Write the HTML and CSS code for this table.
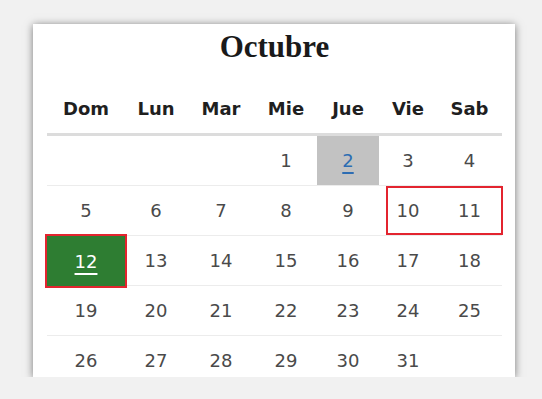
FILE: index.html
```html
<!DOCTYPE html>
<html lang="es">
<head>
  <meta charset="UTF-8">
  <meta name="viewport" content="width=device-width, initial-scale=1.0">
  <title>Calendario</title>
  <link rel="stylesheet" href="styles.css">
</head>
<body>

  <div class="calendar">
    <h1 class="month">Octubre</h1>

    <!-- Nombres de los días -->
    <div class="row weekdays">
      <div>Dom</div>
      <div>Lun</div>
      <div>Mar</div>
      <div>Mie</div>
      <div>Jue</div>
      <div>Vie</div>
      <div>Sab</div>
    </div>

    <!-- Semanas del mes -->
    <div class="row week">
      <div class="day"></div>
      <div class="day"></div>
      <div class="day"></div>
      <div class="day">1</div>
      <div class="day busy"><a href="#">2</a></div>
      <div class="day">3</div>
      <div class="day">4</div>
    </div>

    <div class="row week">
      <div class="day">5</div>
      <div class="day">6</div>
      <div class="day">7</div>
      <div class="day">8</div>
      <div class="day">9</div>
      <!-- fin de semana marcado -->
      <div class="range"></div>
      <div class="day fri">10</div>
      <div class="day sat">11</div>
    </div>

    <div class="row week">
      <div class="day today"><a href="#">12</a></div>
      <div class="day">13</div>
      <div class="day">14</div>
      <div class="day">15</div>
      <div class="day">16</div>
      <div class="day">17</div>
      <div class="day">18</div>
    </div>

    <div class="row week">
      <div class="day">19</div>
      <div class="day">20</div>
      <div class="day">21</div>
      <div class="day">22</div>
      <div class="day">23</div>
      <div class="day">24</div>
      <div class="day">25</div>
    </div>

    <div class="row week">
      <div class="day">26</div>
      <div class="day">27</div>
      <div class="day">28</div>
      <div class="day">29</div>
      <div class="day">30</div>
      <div class="day">31</div>
      <div class="day"></div>
    </div>
  </div>

</body>
</html>
```

FILE: styles.css
```css
body {
  margin: 0;
  background-color: #f1f1f1;
  font-family: 'DejaVu Sans', sans-serif;
}

.calendar {
  box-sizing: border-box;
  width: 482px;
  height: 353px;
  margin: 24px 0 0 33px;
  padding: 5px 13px 0 14px;
  background-color: #fff;
  box-shadow: 0 1px 8px rgba(0, 0, 0, 0.5);
  overflow: hidden;
}

.month {
  margin: 0;
  font-family: 'Liberation Serif', serif;
  font-size: 31px;
  line-height: 36px;
  font-weight: bold;
  text-align: center;
  color: #1a1a1a;
}

.row {
  display: grid;
  grid-template-columns: 78px 62px 68px 62px 62px 58px 65px;
}

/* Cabecera con los días */
.weekdays {
  padding: 33px 0 13px;
  border-bottom: 3px solid #dcdcdc;
  font-size: 18px;
  line-height: 22px;
  font-weight: bold;
  color: #1f1f1f;
  text-align: center;
}

.week {
  height: 49px;
  border-bottom: 1px solid #ececec;
}

.day {
  display: flex;
  align-items: center;
  justify-content: center;
  font-size: 18px;
  color: #4a4a4a;
}

.day a {
  text-decoration: underline;
  text-decoration-thickness: 2px;
  text-underline-offset: 5px;
}

/* Día con eventos */
.busy {
  background-color: #c2c2c2;
}

.busy a {
  color: #2d6db3;
}

/* Día actual */
.today {
  margin-bottom: -1px;
  background-color: #2e7d32;
  outline: 2px solid #e3242f;
}

.today a {
  color: #fff;
}

/* Rango seleccionado */
.range {
  grid-row: 1;
  grid-column: 6 / 8;
  margin: 0 -1px 0 7px;
  border: 2px solid #e3242f;
}

.fri {
  grid-row: 1;
  grid-column: 6;
}

.sat {
  grid-row: 1;
  grid-column: 7;
}
```
